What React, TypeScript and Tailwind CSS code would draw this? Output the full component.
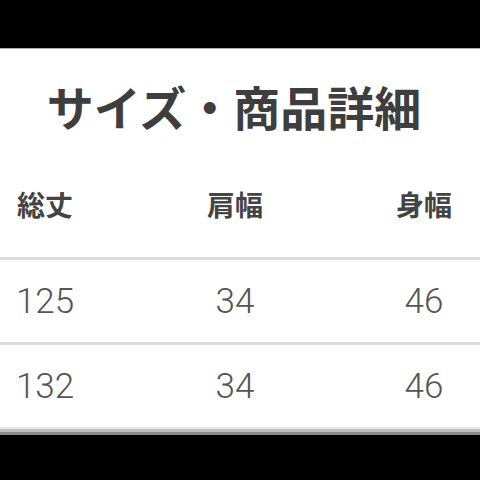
export default function App() {
  const cjk = { fontFamily: '"Noto Sans CJK JP", "Noto Sans", sans-serif' };
  const num = { fontFamily: 'Roboto, "Open Sans", sans-serif' };
  const rows = [
    ["125", "34", "46"],
    ["132", "34", "46"],
  ];
  return (
    <div className="w-[480px] h-[480px] bg-black flex flex-col overflow-hidden">
      <div className="h-[48px] shrink-0" />
      <div className="bg-white border-t border-[#b0b0b0] flex flex-col">
        <div className="h-[112px] flex items-center justify-center pr-[12px]">
          <span className="text-[47px] leading-none font-semibold text-[#3e3e3e]" style={cjk}>
            サイズ・商品詳細
          </span>
        </div>
        <div className="grid grid-cols-[90px_290px_88px] h-[96px] items-center pb-[10px]" style={cjk}>
          <div className="text-center text-[28px] font-semibold text-[#444]">総丈</div>
          <div className="text-center text-[28px] font-semibold text-[#444]">肩幅</div>
          <div className="text-center text-[28px] font-semibold text-[#444]">身幅</div>
        </div>
        {rows.map((r, i) => (
          <div key={i} className="border-t-[3px] border-[#dcdcdc] grid grid-cols-[90px_290px_88px] h-[85px] items-center" style={num}>
            {r.map((v, j) => (
              <div key={j} className="text-center text-[35px] font-light text-[#555] leading-none">
                {v}
              </div>
            ))}
          </div>
        ))}
        <div className="h-[2px] bg-[#e8e8e8]" />
        <div className="h-[3px] bg-[#c0c0c0]" />
        <div className="h-[3px] bg-[#8a8a8a]" />
      </div>
    </div>
  );
}
